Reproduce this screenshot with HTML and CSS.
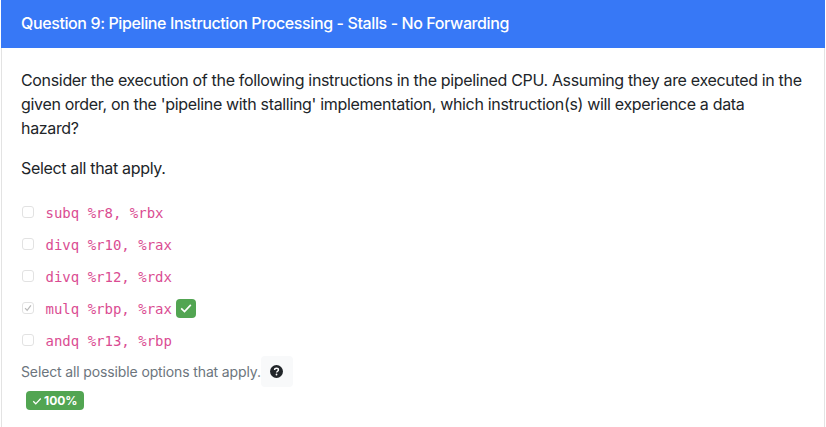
FILE: index.html
```html
<!DOCTYPE html>
<html lang="en">

<head>
    <meta charset="UTF-8">
    <meta name="viewport" content="width=device-width, initial-scale=1.0">
    <title>Question 9</title>
    <link rel="stylesheet" href="styles.css">
</head>

<body>

<div class="card">
    <div class="card-header">Question 9: Pipeline Instruction Processing - Stalls - No Forwarding</div>

    <div class="card-body">
        <p class="prompt">Consider the execution of the following instructions in the pipelined CPU. Assuming they are executed in the given order, on the 'pipeline with stalling' implementation, which instruction(s) will experience a data hazard?</p>
        <p class="prompt">Select all that apply.</p>

        <div class="options">
            <label class="option">
                <span class="check"></span>
                <code>subq %r8, %rbx</code>
            </label>
            <label class="option">
                <span class="check"></span>
                <code>divq %r10, %rax</code>
            </label>
            <label class="option">
                <span class="check"></span>
                <code>divq %r12, %rdx</code>
            </label>
            <label class="option">
                <span class="check">
                    <svg viewBox="0 0 12 12" width="12" height="12"><path d="M2.5 6.2 L5 8.8 L9.5 2.8" fill="none" stroke="#b9b9b9" stroke-width="1.5"/></svg>
                </span>
                <code>mulq %rbp, %rax</code>
                <span class="correct">
                    <svg viewBox="0 0 16 16" width="14" height="14"><path d="M2.5 8.5 L6.3 12 L13.5 4.5" fill="none" stroke="#fff" stroke-width="1.9"/></svg>
                </span>
            </label>
            <label class="option">
                <span class="check"></span>
                <code>andq %r13, %rbp</code>
            </label>
        </div>

        <div class="hint-row">
            <span class="hint">Select all possible options that apply.</span>
            <span class="help">
                <svg viewBox="0 0 16 16" width="13" height="13"><circle cx="8" cy="8" r="8" fill="#212529"/><path d="M5.6 6.2 C5.6 4.7 6.7 4 8 4 C9.4 4 10.4 4.8 10.4 6 C10.4 7.6 8.1 7.7 8.1 9.3" fill="none" stroke="#fff" stroke-width="1.7"/><circle cx="8" cy="11.7" r="1.1" fill="#fff"/></svg>
            </span>
        </div>

        <div class="score">
            <svg viewBox="0 0 16 16" width="10" height="10"><path d="M2 8.5 L6 12.5 L14 4" fill="none" stroke="#fff" stroke-width="2"/></svg>
            100%
        </div>
    </div>
</div>

</body>
</html>
```

FILE: styles.css
```css
body {
    font-family: Inter, "Liberation Sans", sans-serif;
    margin: 0;
    padding: 0;
    background-color: #fff;
    color: #212529;
    overflow: hidden;
}

.card {
    margin-left: 1px;
    margin-right: 1px;
    border-left: 1px solid #e3e3e3;
    border-right: 1px solid #e3e3e3;
}

.card-header {
    background-color: #3778f6;
    color: #fff;
    font-size: 16px;
    font-weight: 500;
    letter-spacing: -0.39px;
    line-height: 24px;
    padding: 11px 19px 13px 20px;
    margin-left: -1px;
    margin-right: -1px;
}

.card-body {
    padding: 20px 19px;
}

.prompt {
    margin: 0 0 16px 0;
    font-size: 16px;
    letter-spacing: -0.33px;
    line-height: 24px;
}

.options {
    display: flex;
    flex-direction: column;
}

.option {
    display: flex;
    align-items: center;
    height: 32px;
}

.check {
    display: flex;
    align-items: center;
    justify-content: center;
    width: 12px;
    height: 12px;
    box-sizing: border-box;
    border: 1px solid #e2e2e2;
    border-radius: 3px;
    margin-left: 1px;
    margin-right: 11.5px;
}

code {
    font-family: "DejaVu Sans Mono", monospace;
    font-size: 14px;
    padding-top: 2px;
    color: #d63384;
    opacity: 0.88;
}

.correct {
    display: flex;
    align-items: center;
    justify-content: center;
    width: 20px;
    height: 19px;
    margin-left: 4px;
    background-color: #52a552;
    border-radius: 4px;
}

.hint-row {
    display: flex;
    align-items: center;
}

.hint {
    font-size: 14px;
    letter-spacing: -0.13px;
    color: #6c757d;
}

.help {
    display: flex;
    align-items: center;
    justify-content: center;
    width: 32px;
    height: 31px;
    background-color: #f8f9fa;
    border-radius: 4px;
}

.score {
    display: flex;
    align-items: center;
    gap: 2px;
    width: fit-content;
    height: 19px;
    padding: 0 6px;
    margin-left: 5px;
    margin-top: 4px;
    background-color: #52a552;
    color: #fff;
    font-size: 12px;
    font-weight: 700;
    border-radius: 4px;
}
```
